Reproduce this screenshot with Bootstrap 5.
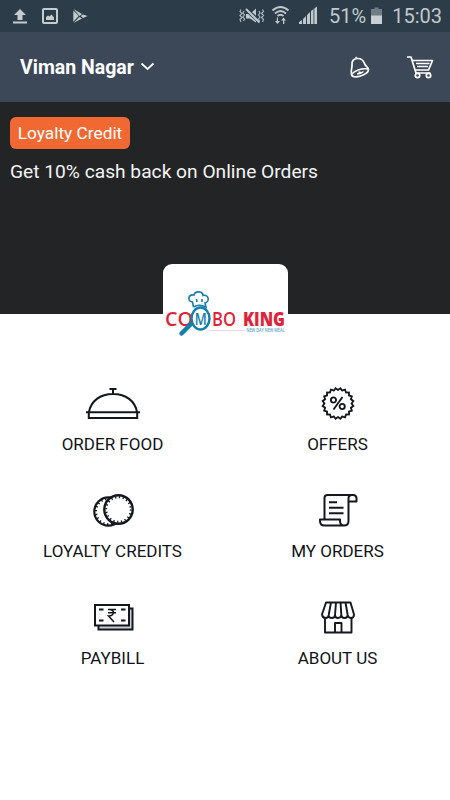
<!DOCTYPE html>
<html lang="en">
<head>
<meta charset="utf-8">
<meta name="viewport" content="width=device-width, initial-scale=1">
<title>Combo King</title>
<link href="https://cdn.jsdelivr.net/npm/bootstrap@5.3.0/dist/css/bootstrap.min.css" rel="stylesheet">
<style>
body{font-family:Roboto,"Liberation Sans",sans-serif;color:#111319;height:800px;overflow:hidden}
svg{display:block;flex:none;overflow:visible}
.status-bar{height:32px;background:#2c3d49;color:#c0c8cc;font-size:20px;line-height:32px}
.top-bar{height:70px;background:#3c4858}
.place{font-size:19.5px;font-weight:700;line-height:30px;padding-top:1px}
.promo{height:212px;background:#232426;padding:15px 10px}
.credit-tag{background:#f06932;border-radius:6px;height:32px;width:120px;font-size:17.3px;line-height:33px}
.promo-text{font-size:19.2px;line-height:24px;margin-top:11px;color:#f4f4f4}
.logo-card{width:125px;height:76px;margin-top:-50px;border-radius:9px}
.menu-grid{margin-top:43px}
.menu-tile{height:107px}
.menu-tile svg{height:40px;width:60px}
.tile-label{font-size:17px;line-height:20px;margin-top:11px;white-space:nowrap}
</style>
</head>
<body class="bg-white">
<div class="status-bar d-flex">
  <svg width="100" height="32" fill="#c5cccf">
    <path d="M20 9l6 6h-3.5v5h-5v-5H14zM13 21.5h14V23.5H13z"/>
    <rect x="43" y="8.9" width="14" height="14" rx="1" fill="none" stroke="#c5cccf" stroke-width="2"/>
    <path d="M46 20v-3l2-1.5 1.5 1 2-2 2.500 3V20z"/>
    <path d="M73.500 9l8.500 5-2.500 2zM73.300 10.500l5.500 5.500-5.500 5.700zM79.500 17l2.500 1.500-8.500 4.500zM83 14.500l4.500 1.500-4.500 2-2.200-2z"/>
  </svg>
  <svg class="ms-auto" width="94" height="32" fill="#c0c8cc" style="">
    <path d="M11 14h4l6-5.500v14L15 18.500h-4z"/>
    <path d="M10 8.500L25 22" stroke="#2c3d49" stroke-width="4"/>
    <path d="M11 9l13.500 13.500" stroke="#c0c8cc" stroke-width="2"/>
    <path d="M6 9.500l-1 2 2 2-2 2 2 2-2 2 1 2.500M9 11l-1 2 1.500 2-1.500 2 1.500 2-1 2M24 11l1 2-1.500 2 1.500 2-1.500 2 1 2M27.500 9.500l1 2-2 2 2 2-2 2 2 2-1 2.500" fill="none" stroke="#a9b3b9" stroke-width="1.200"/>
    <path d="M37.500 10.500q8-7 16 0M40 13.500q5.500-5 11 0M42.500 16q3-2.600 6 0" fill="none" stroke="#c0c8cc" stroke-width="1.800"/>
    <path d="M43 17.500v3.500h2L42.500 24 40 21h1.800v-3.500zM48 24v-3.500h-1.800l2.300-3 2.500 3h-1.700V24z"/>
    <path d="M64 24v-2l3-2v4zM68 24v-5l3-3v8zM72 24v-9l3-3v12zM76 24V11l2.500-2v15zM79.300 24V8.500l2.700-2V24z"/>
  </svg>
  <div style="">51%</div>
  <svg class="ms-1" width="14" height="32"><path d="M1 9h3.500V7.500h4V9H12v7H1z" fill="#707d85"/><path d="M1 15.500h11V24H1z" fill="#c8cfd2"/></svg>
  <div class="ms-2 me-2">15:03</div>
</div>
<nav class="top-bar text-white d-flex align-items-center ps-3">
  <div class="place ps-1">Viman Nagar</div>
  <svg class="ms-1" width="18" height="18" fill="none" stroke="#fff" stroke-width="1.700"><path d="M3.500 5.500l6 5.500 6-5.500"/></svg>
  <svg class="ms-auto" width="110" height="70" fill="none" stroke="#fff" stroke-width="1.700" stroke-linejoin="round">
    <path d="M11.500 42.500C10.500 37 12.500 36 12 32C11.800 28.500 14 27 17 26.500C21 26.300 23.500 28.500 24.500 31.500C25.300 34.500 28.500 35 28.500 37.500C28.500 40 25 42.500 20.500 44C16 45.500 11.900 45 11.500 42.500Z"/>
    <path d="M12 42C14 39 21 36 28 37M16.500 26.200l-.8-1.200M17 42q4-.2 6.500-2.500M18.500 40l3 .7" stroke-width="1.400"/>
    <path d="M67 25h4l5 16h14.500M72.500 28.500H92.500L88.500 38H75"/><path d="M76 31.500h13.500M77 34.500h11" stroke-width="1.300"/>
    <circle cx="77.500" cy="43.500" r="2.200"/><circle cx="88.500" cy="43.500" r="2.200"/>
  </svg>
</nav>
<section class="promo">
  <div class="credit-tag text-white text-center">Loyalty Credit</div>
  <div class="promo-text">Get 10% cash back on Online Orders</div>
</section>
<div class="logo-card bg-white mx-auto position-relative">
  <svg width="125" height="76" font-family="Open Sans,Roboto,sans-serif">
    <g fill="#df2439">
      <text x="2" y="61.500" font-size="20" font-weight="600" textLength="28" lengthAdjust="spacingAndGlyphs">CO</text>
      <text x="49" y="61.500" font-size="20" font-weight="600" textLength="24" lengthAdjust="spacingAndGlyphs">BO</text>
      <text x="80" y="61.500" font-size="20" font-weight="800" textLength="42" lengthAdjust="spacingAndGlyphs">KING</text>
    </g>
    <path d="M28 60L18.500 69.500" stroke="#167eac" stroke-width="4.500" stroke-linecap="round"/>
    <ellipse cx="37.500" cy="54.500" rx="9" ry="11" fill="#fff" stroke="#167eac" stroke-width="2.500"/>
    <text x="31.700" y="60.500" font-size="16" font-weight="600" fill="#167eac" textLength="12" lengthAdjust="spacingAndGlyphs">M</text>
    <path d="M30.500 43L29.500 38C24 37 25 30 31 31C32 26.500 40 27 40 31.500C46 30 47 38 42 39L43 43Q36 39.500 30.500 43M34 38l-.6-3M39 38v-3" fill="#fff" stroke="#167eac" stroke-width="1.600"/>
    <path d="M47 66.500H82" stroke="#f4bec3" stroke-width=".6"/>
    <text x="83.500" y="68.300" font-size="4.700" font-weight="600" fill="#5aa2c0" textLength="38" lengthAdjust="spacingAndGlyphs">NEW DAY NEW MEAL</text>
  </svg>
</div>
<main class="menu-grid row g-0 text-center">
  <div class="col-6 menu-tile d-flex flex-column align-items-center">
    <svg viewBox="0 0 60 40" fill="none" stroke="#15171f" stroke-width="2"><path d="M26.500 6h7M30 6v5M6 29C8 18 17 11 30 11S52 18 54 29M3 29.200h54M5.800 29.500V35h48.400v-5.500"/></svg>
    <div class="tile-label">ORDER FOOD</div>
  </div>
  <div class="col-6 menu-tile d-flex flex-column align-items-center">
    <svg viewBox="0 0 60 40">
      <defs><g id="burst"><rect id="facet" x="-10.700" y="-10.700" width="21.400" height="21.400"/><use href="#facet" transform="rotate(18)"/><use href="#facet" transform="rotate(36)"/><use href="#facet" transform="rotate(54)"/><use href="#facet" transform="rotate(72)"/></g></defs>
      <g transform="translate(30 20.500)"><use href="#burst" fill="#15171f" stroke="#15171f" stroke-width="2.400"/><use href="#burst" fill="#fff" transform="scale(.94)"/>
      <g fill="none" stroke="#15171f" stroke-width="1.900"><circle cx="-4.500" cy="-3.500" r="2.600"/><circle cx="4.200" cy="3" r="2.600"/><path d="M4.500-6.500L-4.500 6"/></g></g>
    </svg>
    <div class="tile-label">OFFERS</div>
  </div>
  <div class="col-6 menu-tile d-flex flex-column align-items-center">
    <svg viewBox="0 0 60 40" fill="#fff" stroke="#15171f"><circle cx="25.500" cy="21.500" r="14.200" stroke-width="2.200"/><circle cx="25.500" cy="21.500" r="12.500" stroke-width="2" stroke-dasharray="1.300 2.627"/><circle cx="35.500" cy="19.500" r="14.200" stroke-width="2.400"/><circle cx="35.500" cy="19.500" r="12.300" stroke-width="2" stroke-dasharray="1.300 2.564"/></svg>
    <div class="tile-label">LOYALTY CREDITS</div>
  </div>
  <div class="col-6 menu-tile d-flex flex-column align-items-center">
    <svg viewBox="0 0 60 40" fill="none" stroke="#15171f" stroke-width="2" stroke-linejoin="round"><path d="M16.500 29V8Q16.500 5 19.500 5H45Q48.500 5 48.500 8.500V11.500H40.500M44 5Q40.500 5 40.500 8.500V31Q40.500 35.500 36 35.500H16.500Q12 35.500 12 31V29.500H32V31Q32 35.500 36 35.500M21 12.300h8M21 17.800h14.500M21 23.300h14.500"/></svg>
    <div class="tile-label">MY ORDERS</div>
  </div>
  <div class="col-6 menu-tile d-flex flex-column align-items-center">
    <svg viewBox="0 0 60 40" fill="none" stroke="#15171f" stroke-width="2"><path d="M15.500 11.500h34v21h-34z" fill="#ccd1d5"/><path d="M12 8h34v20.500H12z" fill="#fff"/><path d="M16 12.500h4.500M38 12.500h4.500M16 23.500h4.500M38 23.500h4.500" stroke-width="1.900"/><path d="M25 12.500h8M25 15.800h8M26 12.500c6-.5 6 6.500-.5 6.500l5.500 6" stroke-width="1.500"/></svg>
    <div class="tile-label">PAYBILL</div>
  </div>
  <div class="col-6 menu-tile d-flex flex-column align-items-center">
    <svg viewBox="0 0 60 40" fill="none" stroke="#15171f" stroke-width="1.900" stroke-linejoin="round"><path d="M17 21v14.500h26.500V21M27 35V26h6.500v9"/><path d="M18 5.500H42.500L46 17.500Q46 21 43 21T39.700 18Q39.500 21 36.500 21T33.300 18Q33 21 30 21T27 18Q27 21 23.800 21T20.700 18Q20.500 21 17.500 21T14 17.500ZM20.700 18L23 5.500M27 18l1-12.500M33.300 18l-.7-12.500M39.700 18L37.500 5.500"/></svg>
    <div class="tile-label">ABOUT US</div>
  </div>
</main>
<script src="https://cdn.jsdelivr.net/npm/bootstrap@5.3.0/dist/js/bootstrap.bundle.min.js"></script>
</body>
</html>
